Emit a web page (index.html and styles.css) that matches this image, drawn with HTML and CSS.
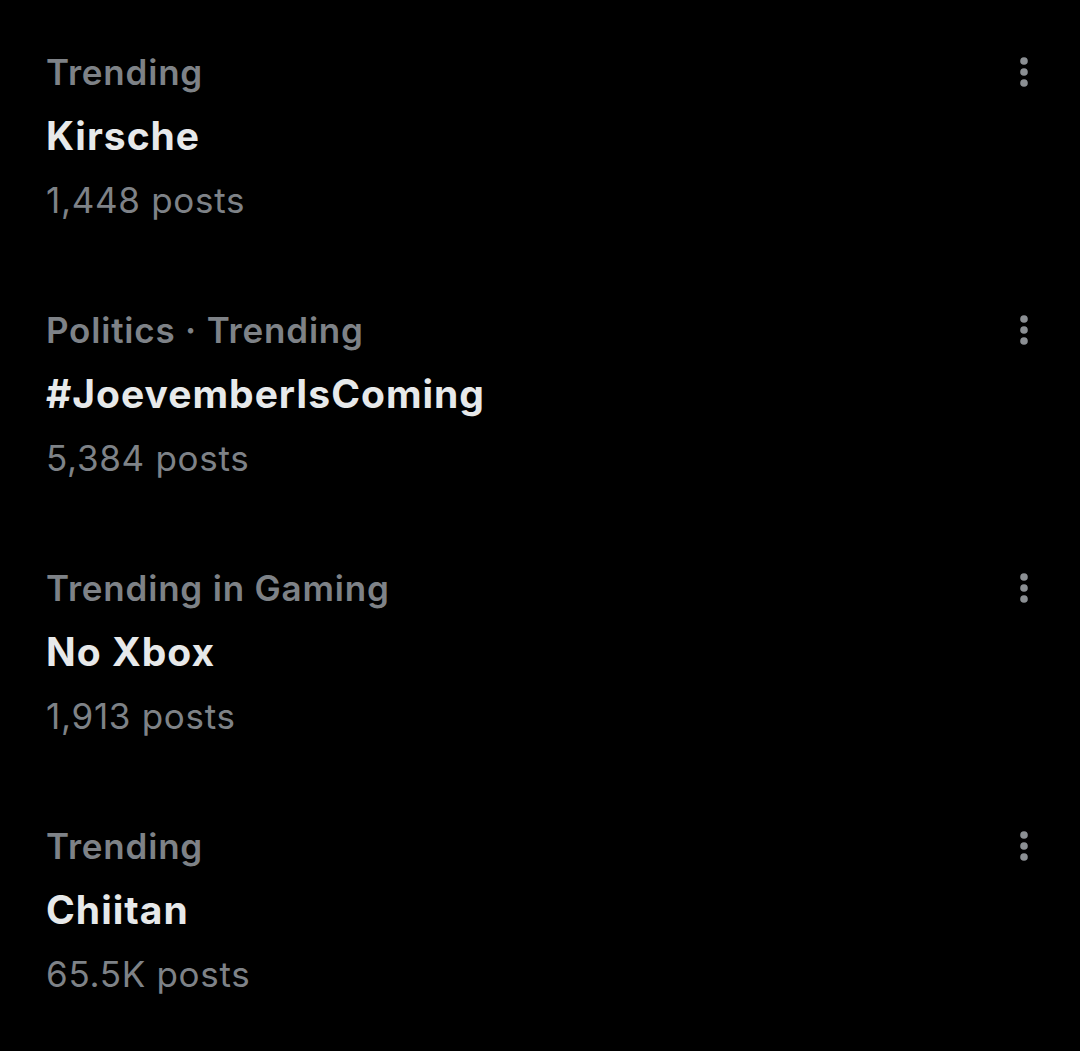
FILE: index.html
```html
<!DOCTYPE html>
<html>
<head>
    <title>Trending</title>
    <link rel="stylesheet" href="styles.css">
</head>
<body>
    <div class="trends">
        <div class="trend">
            <div class="trend-top">
                <div class="category">Trending</div>
                <svg class="more" viewBox="0 0 8 30"><circle cx="4" cy="4" r="3.8"/><circle cx="4" cy="15" r="3.8"/><circle cx="4" cy="26" r="3.8"/></svg>
            </div>
            <div class="title">Kirsche</div>
            <div class="count">1,448 posts</div>
        </div>
        <div class="trend">
            <div class="trend-top">
                <div class="category">Politics · Trending</div>
                <svg class="more" viewBox="0 0 8 30"><circle cx="4" cy="4" r="3.8"/><circle cx="4" cy="15" r="3.8"/><circle cx="4" cy="26" r="3.8"/></svg>
            </div>
            <div class="title">#JoevemberIsComing</div>
            <div class="count">5,384 posts</div>
        </div>
        <div class="trend">
            <div class="trend-top">
                <div class="category">Trending in Gaming</div>
                <svg class="more" viewBox="0 0 8 30"><circle cx="4" cy="4" r="3.8"/><circle cx="4" cy="15" r="3.8"/><circle cx="4" cy="26" r="3.8"/></svg>
            </div>
            <div class="title">No Xbox</div>
            <div class="count">1,913 posts</div>
        </div>
        <div class="trend">
            <div class="trend-top">
                <div class="category">Trending</div>
                <svg class="more" viewBox="0 0 8 30"><circle cx="4" cy="4" r="3.8"/><circle cx="4" cy="15" r="3.8"/><circle cx="4" cy="26" r="3.8"/></svg>
            </div>
            <div class="title">Chiitan</div>
            <div class="count">65.5K posts</div>
        </div>
    </div>
</body>
</html>
```

FILE: styles.css
```css
body {
    margin: 0;
    background-color: #000;
    font-family: Inter, "Liberation Sans", sans-serif;
    color: #e7e9ea;
}
.trends {
    display: flex;
    flex-direction: column;
}
.trend {
    padding: 40px 52px 26px 46px;
}
.trend-top {
    display: flex;
    justify-content: space-between;
    align-items: center;
}
.category {
    font-size: 35px;
    font-weight: 600;
    letter-spacing: 0.8px;
    line-height: 64px;
    color: #7e8287;
}
.more {
    width: 8px;
    height: 30px;
    fill: #8b8f93;
}
.title {
    font-size: 39px;
    font-weight: 700;
    letter-spacing: 1px;
    line-height: 64px;
    color: #e7e9ea;
}
.count {
    font-size: 35px;
    letter-spacing: 0.7px;
    line-height: 64px;
    color: #7e8287;
}
```
